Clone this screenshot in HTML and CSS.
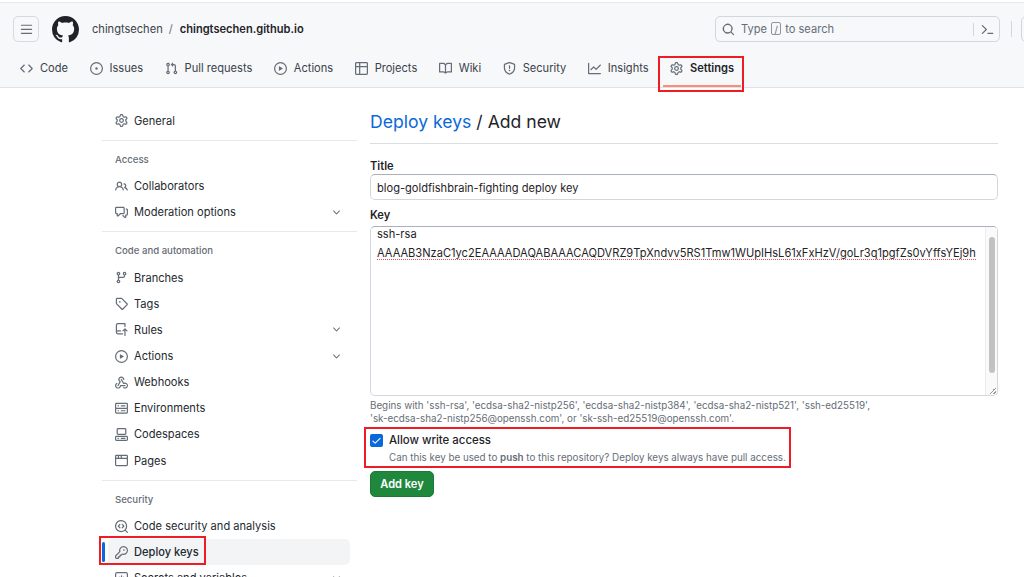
FILE: index.html
```html
<!DOCTYPE html>
<html lang="en">
<head>
    <meta charset="UTF-8">
    <meta name="viewport" content="width=device-width, initial-scale=1.0">
    <title>Add deploy key</title>
    <link rel="stylesheet" href="styles.css">
</head>
<body>
    <svg class="sprite" aria-hidden="true">
        <symbol id="i-bars" viewBox="0 0 16 16"><path d="M1 2.75A.75.75 0 0 1 1.75 2h12.5a.75.75 0 0 1 0 1.5H1.75A.75.75 0 0 1 1 2.75Zm0 5A.75.75 0 0 1 1.75 7h12.5a.75.75 0 0 1 0 1.5H1.75A.75.75 0 0 1 1 7.75ZM1.75 12h12.5a.75.75 0 0 1 0 1.5H1.75a.75.75 0 0 1 0-1.5Z"/></symbol>
        <symbol id="i-github" viewBox="0 0 16 16"><path d="M8 0c4.42 0 8 3.58 8 8a8.013 8.013 0 0 1-5.45 7.59c-.4.08-.55-.17-.55-.38 0-.27.01-1.13.01-2.2 0-.75-.25-1.23-.54-1.48 1.78-.2 3.65-.88 3.65-3.95 0-.88-.31-1.59-.82-2.15.08-.2.36-1.02-.08-2.12 0 0-.67-.22-2.2.82-.64-.18-1.32-.27-2-.27-.68 0-1.36.09-2 .27-1.53-1.03-2.2-.82-2.2-.82-.44 1.1-.16 1.92-.08 2.12-.51.56-.82 1.28-.82 2.15 0 3.06 1.86 3.75 3.64 3.95-.23.2-.44.55-.51 1.07-.46.21-1.61.55-2.33-.66-.15-.24-.6-.83-1.23-.82-.67.01-.27.38.01.53.34.19.73.9.82 1.13.16.45.68 1.31 2.69.94 0 .67.01 1.3.01 1.49 0 .21-.15.45-.55.38A7.995 7.995 0 0 1 0 8c0-4.42 3.58-8 8-8Z"/></symbol>
        <symbol id="i-code" viewBox="0 0 16 16"><path d="m11.28 3.22 4.25 4.25a.75.75 0 0 1 0 1.06l-4.25 4.25a.749.749 0 0 1-1.275-.326.749.749 0 0 1 .215-.734L13.94 8l-3.72-3.72a.749.749 0 0 1 .326-1.275.749.749 0 0 1 .734.215Zm-6.56 0a.751.751 0 0 1 1.042.018.751.751 0 0 1 .018 1.042L2.06 8l3.72 3.72a.749.749 0 0 1-.326 1.275.749.749 0 0 1-.734-.215L.47 8.53a.75.75 0 0 1 0-1.06Z"/></symbol>
        <symbol id="i-issue" viewBox="0 0 16 16"><path d="M8 9.5a1.5 1.5 0 1 0 0-3 1.5 1.5 0 0 0 0 3Z"/><path d="M8 0a8 8 0 1 1 0 16A8 8 0 0 1 8 0ZM1.5 8a6.5 6.5 0 1 0 13 0 6.5 6.5 0 0 0-13 0Z"/></symbol>
        <symbol id="i-pr" viewBox="0 0 16 16"><path d="M1.5 3.25a2.25 2.25 0 1 1 3 2.122v5.256a2.251 2.251 0 1 1-1.5 0V5.372A2.25 2.25 0 0 1 1.5 3.25Zm5.677-.177L9.573.677A.25.25 0 0 1 10 .854V2.5h1A2.5 2.5 0 0 1 13.5 5v5.628a2.251 2.251 0 1 1-1.5 0V5a1 1 0 0 0-1-1h-1v1.646a.25.25 0 0 1-.427.177L7.177 3.427a.25.25 0 0 1 0-.354ZM3.75 2.5a.75.75 0 1 0 0 1.5.75.75 0 0 0 0-1.5Zm0 9.5a.75.75 0 1 0 0 1.5.75.75 0 0 0 0-1.5Zm8.25.75a.75.75 0 1 0 1.5 0 .75.75 0 0 0-1.5 0Z"/></symbol>
        <symbol id="i-play" viewBox="0 0 16 16"><path d="M8 0a8 8 0 1 1 0 16A8 8 0 0 1 8 0ZM1.5 8a6.5 6.5 0 1 0 13 0 6.5 6.5 0 0 0-13 0Zm4.879-2.773 4.264 2.559a.25.25 0 0 1 0 .428l-4.264 2.559A.25.25 0 0 1 6 10.559V5.442a.25.25 0 0 1 .379-.215Z"/></symbol>
        <symbol id="i-table" viewBox="0 0 16 16"><path d="M0 1.75C0 .784.784 0 1.75 0h12.5C15.216 0 16 .784 16 1.75v12.5A1.75 1.75 0 0 1 14.25 16H1.75A1.75 1.75 0 0 1 0 14.25ZM6.5 6.5v8h7.75a.25.25 0 0 0 .25-.25V6.5Zm8-1.5V1.75a.25.25 0 0 0-.25-.25H6.5V5Zm-13 1.5v7.75c0 .138.112.25.25.25H5v-8ZM5 5V1.5H1.75a.25.25 0 0 0-.25.25V5Z"/></symbol>
        <symbol id="i-book" viewBox="0 0 16 16"><path d="M0 1.75A.75.75 0 0 1 .75 1h4.253c1.227 0 2.317.59 3 1.501A3.743 3.743 0 0 1 11.006 1h4.245a.75.75 0 0 1 .75.75v10.5a.75.75 0 0 1-.75.75h-4.507a2.25 2.25 0 0 0-1.591.659l-.622.621a.75.75 0 0 1-1.06 0l-.622-.621A2.25 2.25 0 0 0 5.258 13H.75a.75.75 0 0 1-.75-.75Zm7.251 10.324.004-5.073-.002-2.253A2.25 2.25 0 0 0 5.003 2.5H1.5v9h3.757a3.75 3.75 0 0 1 1.994.574ZM8.755 4.75l-.004 7.322a3.752 3.752 0 0 1 1.992-.572H14.5v-9h-3.495a2.25 2.25 0 0 0-2.25 2.25Z"/></symbol>
        <symbol id="i-shield" viewBox="0 0 16 16"><path d="M7.467.133a1.748 1.748 0 0 1 1.066 0l5.25 1.68A1.75 1.75 0 0 1 15 3.48V7c0 1.566-.32 3.182-1.303 4.682-.983 1.498-2.585 2.813-5.032 3.855a1.697 1.697 0 0 1-1.33 0c-2.447-1.042-4.049-2.357-5.032-3.855C1.32 10.182 1 8.566 1 7V3.48a1.75 1.75 0 0 1 1.217-1.667Zm.61 1.429a.25.25 0 0 0-.153 0l-5.25 1.68a.25.25 0 0 0-.174.238V7c0 1.358.275 2.666 1.057 3.86.784 1.194 2.121 2.34 4.366 3.297a.196.196 0 0 0 .154 0c2.245-.956 3.582-2.104 4.366-3.298C13.225 9.666 13.5 8.36 13.5 7V3.48a.251.251 0 0 0-.174-.237l-5.25-1.68ZM8.75 4.75v3a.75.75 0 0 1-1.5 0v-3a.75.75 0 0 1 1.5 0ZM9 10.5a1 1 0 1 1-2 0 1 1 0 0 1 2 0Z"/></symbol>
        <symbol id="i-graph" viewBox="0 0 16 16"><path d="M1.5 1.75V13.5h13.75a.75.75 0 0 1 0 1.5H.75a.75.75 0 0 1-.75-.75V1.75a.75.75 0 0 1 1.5 0Zm14.28 2.53-5.25 5.25a.75.75 0 0 1-1.06 0L7 7.06 4.28 9.78a.751.751 0 0 1-1.042-.018.751.751 0 0 1-.018-1.042l3.25-3.25a.75.75 0 0 1 1.06 0L10 7.94l4.72-4.72a.751.751 0 0 1 1.042.018.751.751 0 0 1 .018 1.042Z"/></symbol>
        <symbol id="i-gear" viewBox="0 0 16 16"><path d="M8 0a8.2 8.2 0 0 1 .701.031C9.444.095 9.99.645 10.16 1.29l.288 1.107c.018.066.079.158.212.224.231.114.454.243.668.386.123.082.233.09.299.071l1.103-.303c.644-.176 1.392.021 1.82.63.27.385.506.792.704 1.218.315.675.111 1.422-.364 1.891l-.814.806c-.049.048-.098.147-.088.294.016.257.016.515 0 .772-.01.147.038.246.088.294l.814.806c.475.469.679 1.216.364 1.891a7.977 7.977 0 0 1-.704 1.217c-.428.61-1.176.807-1.82.63l-1.102-.302c-.067-.019-.177-.011-.3.071a5.909 5.909 0 0 1-.668.386c-.133.066-.194.158-.211.224l-.29 1.106c-.168.646-.715 1.196-1.458 1.26a8.006 8.006 0 0 1-1.402 0c-.743-.064-1.289-.614-1.458-1.26l-.289-1.106c-.018-.066-.079-.158-.212-.224a5.738 5.738 0 0 1-.668-.386c-.123-.082-.233-.09-.299-.071l-1.103.303c-.644.176-1.392-.021-1.82-.63a8.12 8.12 0 0 1-.704-1.218c-.315-.675-.111-1.422.363-1.891l.815-.806c.05-.048.098-.147.088-.294a6.214 6.214 0 0 1 0-.772c.01-.147-.038-.246-.088-.294l-.815-.806C.635 6.045.431 5.298.746 4.623a7.92 7.92 0 0 1 .704-1.217c.428-.61 1.176-.807 1.82-.63l1.102.302c.067.019.177.011.3-.071.214-.143.437-.272.668-.386.133-.066.194-.158.211-.224l.29-1.106C6.009.645 6.556.095 7.299.03 7.53.01 7.764 0 8 0Zm-.571 1.525c-.036.003-.108.036-.137.146l-.289 1.105c-.147.561-.549.967-.998 1.189-.173.086-.34.183-.5.29-.417.278-.97.423-1.529.27l-1.103-.303c-.109-.03-.175.016-.195.045-.22.312-.412.644-.573.99-.014.031-.021.11.059.19l.815.806c.411.406.562.957.53 1.456a4.709 4.709 0 0 0 0 .582c.032.499-.119 1.05-.53 1.456l-.815.806c-.081.08-.073.159-.059.19.162.346.353.677.573.989.02.03.085.076.195.046l1.102-.303c.56-.153 1.113-.008 1.53.27.161.107.328.204.501.29.447.222.85.629.997 1.189l.289 1.105c.029.109.101.143.137.146a6.6 6.6 0 0 0 1.142 0c.036-.003.108-.036.137-.146l.289-1.105c.147-.561.549-.967.998-1.189.173-.086.34-.183.5-.29.417-.278.97-.423 1.529-.27l1.103.303c.109.029.175-.016.195-.045.22-.313.411-.644.573-.99.014-.031.021-.11-.059-.19l-.815-.806c-.411-.406-.562-.957-.53-1.456a4.709 4.709 0 0 0 0-.582c-.032-.499.119-1.05.53-1.456l.815-.806c.081-.08.073-.159.059-.19a6.464 6.464 0 0 0-.573-.989c-.02-.03-.085-.076-.195-.046l-1.102.303c-.56.153-1.113.008-1.53-.27a4.44 4.44 0 0 0-.501-.29c-.447-.222-.85-.629-.997-1.189l-.289-1.105c-.029-.11-.101-.143-.137-.146a6.6 6.6 0 0 0-1.142 0ZM11 8a3 3 0 1 1-6 0 3 3 0 0 1 6 0ZM9.5 8a1.5 1.5 0 1 0-3.001.001A1.5 1.5 0 0 0 9.5 8Z"/></symbol>
        <symbol id="i-search" viewBox="0 0 16 16"><path d="M10.68 11.74a6 6 0 0 1-7.922-8.982 6 6 0 0 1 8.982 7.922l3.04 3.04a.749.749 0 0 1-.326 1.275.749.749 0 0 1-.734-.215ZM11.5 7a4.499 4.499 0 1 0-8.997 0A4.499 4.499 0 0 0 11.5 7Z"/></symbol>
        <symbol id="i-palette" viewBox="0 0 16 16"><path d="M1.2 2.7a.75.75 0 0 1 1.06 0l4.8 4.8a.75.75 0 0 1 0 1.06l-4.8 4.8a.75.75 0 0 1-1.06-1.06L5.47 8.03 1.2 3.76a.75.75 0 0 1 0-1.06ZM8.5 12h6a.75.75 0 0 1 0 1.5h-6a.75.75 0 0 1 0-1.5Z"/></symbol>
        <symbol id="i-people" viewBox="0 0 16 16"><path d="M2 5.5a3.5 3.5 0 1 1 5.898 2.549 5.508 5.508 0 0 1 3.034 4.084.75.75 0 1 1-1.482.235 4 4 0 0 0-7.9 0 .75.75 0 0 1-1.482-.236A5.507 5.507 0 0 1 3.102 8.05 3.493 3.493 0 0 1 2 5.5ZM11 4a3.001 3.001 0 0 1 2.22 5.018 5.01 5.01 0 0 1 2.56 3.012.749.749 0 0 1-.885.954.752.752 0 0 1-.549-.514 3.507 3.507 0 0 0-2.522-2.372.75.75 0 0 1-.574-.73v-.352a.75.75 0 0 1 .416-.672A1.5 1.5 0 0 0 11 5.5.75.75 0 0 1 11 4Zm-5.5-.5a2 2 0 1 0-.001 3.999A2 2 0 0 0 5.5 3.5Z"/></symbol>
        <symbol id="i-comment" viewBox="0 0 16 16"><path d="M1.75 1h8.5c.966 0 1.75.784 1.75 1.75v5.5A1.75 1.75 0 0 1 10.25 10H7.061l-2.574 2.573A1.458 1.458 0 0 1 2 11.543V10h-.25A1.75 1.75 0 0 1 0 8.25v-5.5C0 1.784.784 1 1.75 1ZM1.5 2.75v5.5c0 .138.112.25.25.25h1a.75.75 0 0 1 .75.75v2.19l2.72-2.72a.749.749 0 0 1 .53-.22h3.5a.25.25 0 0 0 .25-.25v-5.5a.25.25 0 0 0-.25-.25h-8.5a.25.25 0 0 0-.25.25Zm13 2a.25.25 0 0 0-.25-.25h-.5a.75.75 0 0 1 0-1.5h.5c.966 0 1.75.784 1.75 1.75v5.5A1.75 1.75 0 0 1 14.25 12H14v1.543a1.458 1.458 0 0 1-2.487 1.03L9.22 12.28a.749.749 0 0 1 .326-1.275.749.749 0 0 1 .734.215l2.22 2.22v-2.19a.75.75 0 0 1 .75-.75h1a.25.25 0 0 0 .25-.25Z"/></symbol>
        <symbol id="i-branch" viewBox="0 0 16 16"><path d="M9.5 3.25a2.25 2.25 0 1 1 3 2.122V6A2.5 2.5 0 0 1 10 8.5H6a1 1 0 0 0-1 1v1.128a2.251 2.251 0 1 1-1.5 0V5.372a2.25 2.25 0 1 1 1.5 0v1.836A2.493 2.493 0 0 1 6 7h4a1 1 0 0 0 1-1v-.628A2.25 2.25 0 0 1 9.5 3.25Zm-6 0a.75.75 0 1 0 1.5 0 .75.75 0 0 0-1.5 0Zm8.25-.75a.75.75 0 1 0 0 1.5.75.75 0 0 0 0-1.5ZM4.25 12a.75.75 0 1 0 0 1.5.75.75 0 0 0 0-1.5Z"/></symbol>
        <symbol id="i-tag" viewBox="0 0 16 16"><path d="M1 7.775V2.75C1 1.784 1.784 1 2.75 1h5.025c.464 0 .91.184 1.238.513l6.25 6.25a1.75 1.75 0 0 1 0 2.474l-5.026 5.026a1.75 1.75 0 0 1-2.474 0l-6.25-6.25A1.75 1.75 0 0 1 1 7.775Zm1.5 0c0 .066.026.13.073.177l6.25 6.25a.25.25 0 0 0 .354 0l5.025-5.025a.25.25 0 0 0 0-.354l-6.25-6.25a.25.25 0 0 0-.177-.073H2.75a.25.25 0 0 0-.25.25ZM6 5a1 1 0 1 1 0 2 1 1 0 0 1 0-2Z"/></symbol>
        <symbol id="i-push" viewBox="0 0 16 16"><path d="M1 2.5A2.5 2.5 0 0 1 3.5 0h8.75a.75.75 0 0 1 .75.75v3.5a.75.75 0 0 1-1.5 0V1.5h-8a1 1 0 0 0-1 1v6.708A2.493 2.493 0 0 1 3.5 9h3.25a.75.75 0 0 1 0 1.5H3.5a1 1 0 0 0 0 2h5.75a.75.75 0 0 1 0 1.5H3.5A2.5 2.5 0 0 1 1 11.5Zm13.23 7.79h-.001l-1.224-1.224v6.184a.75.75 0 0 1-1.5 0V9.066L10.28 10.29a.75.75 0 0 1-1.06-1.061l2.505-2.504a.75.75 0 0 1 1.06 0L15.29 9.23a.751.751 0 0 1-.018 1.042.751.751 0 0 1-1.042.018Z"/></symbol>
        <symbol id="i-webhook" viewBox="0 0 16 16"><path d="M5.5 4.25a2.25 2.25 0 0 1 4.5 0 .75.75 0 0 0 1.5 0 3.75 3.75 0 1 0-6.14 2.889l-2.272 4.258a.75.75 0 0 0 1.324.706L7 7.25a.75.75 0 0 0-.309-1.015A2.25 2.25 0 0 1 5.5 4.25Z"/><path d="M7.364 3.607a.75.75 0 0 1 1.03.257l2.608 4.349a3.75 3.75 0 1 1-.628 6.785.75.75 0 0 1 .752-1.299 2.25 2.25 0 1 0-.033-3.88.75.75 0 0 1-1.03-.256L7.107 4.636a.75.75 0 0 1 .257-1.03Z"/><path d="M2.9 8.776A.75.75 0 0 1 2.625 9.8 2.25 2.25 0 1 0 6 11.75a.75.75 0 0 1 .75-.751h5.5a.75.75 0 0 1 0 1.5H7.425a3.751 3.751 0 1 1-5.55-3.998.75.75 0 0 1 1.024.274Z"/></symbol>
        <symbol id="i-server" viewBox="0 0 16 16"><path d="M1.75 1h12.5c.966 0 1.75.784 1.75 1.75v4c0 .372-.116.717-.314 1 .198.283.314.628.314 1v4a1.75 1.75 0 0 1-1.75 1.75H1.75A1.75 1.75 0 0 1 0 12.75v-4c0-.372.116-.717.314-1a1.739 1.739 0 0 1-.314-1v-4C0 1.784.784 1 1.75 1ZM1.5 2.75v4c0 .138.112.25.25.25h12.5a.25.25 0 0 0 .25-.25v-4a.25.25 0 0 0-.25-.25H1.75a.25.25 0 0 0-.25.25Zm.25 5.75a.25.25 0 0 0-.25.25v4c0 .138.112.25.25.25h12.5a.25.25 0 0 0 .25-.25v-4a.25.25 0 0 0-.25-.25ZM7 4.75A.75.75 0 0 1 7.75 4h4.5a.75.75 0 0 1 0 1.5h-4.5A.75.75 0 0 1 7 4.75ZM7.75 10h4.5a.75.75 0 0 1 0 1.5h-4.5a.75.75 0 0 1 0-1.5ZM3 4.75A.75.75 0 0 1 3.75 4h.5a.75.75 0 0 1 0 1.5h-.5A.75.75 0 0 1 3 4.75ZM3.75 10h.5a.75.75 0 0 1 0 1.5h-.5a.75.75 0 0 1 0-1.5Z"/></symbol>
        <symbol id="i-codespaces" viewBox="0 0 16 16"><path d="M0 11.25c0-.966.784-1.75 1.75-1.75h12.5c.966 0 1.75.784 1.75 1.75v3A1.75 1.75 0 0 1 14.25 16H1.75A1.75 1.75 0 0 1 0 14.25Zm2-9.5C2 .784 2.784 0 3.75 0h8.5C13.216 0 14 .784 14 1.75v5a1.75 1.75 0 0 1-1.75 1.75h-8.5A1.75 1.75 0 0 1 2 6.75Zm1.75-.25a.25.25 0 0 0-.25.25v5c0 .138.112.25.25.25h8.5a.25.25 0 0 0 .25-.25v-5a.25.25 0 0 0-.25-.25Zm-2 9.5a.25.25 0 0 0-.25.25v3c0 .138.112.25.25.25h12.5a.25.25 0 0 0 .25-.25v-3a.25.25 0 0 0-.25-.25Z"/><path d="M7 12.75a.75.75 0 0 1 .75-.75h4.5a.75.75 0 0 1 0 1.5h-4.5a.75.75 0 0 1-.75-.75Zm-4 0a.75.75 0 0 1 .75-.75h.5a.75.75 0 0 1 0 1.5h-.5a.75.75 0 0 1-.75-.75Z"/></symbol>
        <symbol id="i-browser" viewBox="0 0 16 16"><path d="M0 2.75C0 1.784.784 1 1.75 1h12.5c.966 0 1.75.784 1.75 1.75v10.5A1.75 1.75 0 0 1 14.25 15H1.75A1.75 1.75 0 0 1 0 13.25ZM14.5 6h-13v7.25c0 .138.112.25.25.25h12.5a.25.25 0 0 0 .25-.25Zm-6-3.5v2h6V2.75a.25.25 0 0 0-.25-.25ZM5 2.5v2h2v-2Zm-3.25 0a.25.25 0 0 0-.25.25V4.5H3.5v-2Z"/></symbol>
        <symbol id="i-codescan" viewBox="0 0 16 16"><path d="M8.47 4.97a.75.75 0 0 0 0 1.06L9.94 7.5 8.47 8.97a.75.75 0 1 0 1.06 1.06l2-2a.75.75 0 0 0 0-1.06l-2-2a.75.75 0 0 0-1.06 0ZM6.53 6.03a.75.75 0 0 0-1.06-1.06l-2 2a.75.75 0 0 0 0 1.06l2 2a.75.75 0 1 0 1.06-1.06L5.06 7.5l1.47-1.47Z"/><path d="M12.246 13.307a7.501 7.501 0 1 1 1.06-1.06l2.474 2.473a.749.749 0 0 1-.326 1.275.749.749 0 0 1-.734-.215ZM1.5 7.5a6.002 6.002 0 0 0 3.608 5.504 6.002 6.002 0 0 0 6.486-1.117.748.748 0 0 1 .292-.293A6 6 0 1 0 1.5 7.5Z"/></symbol>
        <symbol id="i-key" viewBox="0 0 16 16"><path d="M10.5 0a5.499 5.499 0 1 1-1.288 10.848l-.932.932a.749.749 0 0 1-.53.22H7v.75a.749.749 0 0 1-.22.53l-.5.5a.749.749 0 0 1-.53.22H5v.75a.749.749 0 0 1-.22.53l-.5.5a.749.749 0 0 1-.53.22h-2A1.75 1.75 0 0 1 0 14.25v-2c0-.199.079-.389.22-.53l4.932-4.932A5.5 5.5 0 0 1 10.5 0Zm-4 5.5c-.001.431.069.86.205 1.269a.75.75 0 0 1-.181.768L1.5 12.56v1.69c0 .138.112.25.25.25h1.69l.06-.06v-1.19a.75.75 0 0 1 .75-.75h1.19l.06-.06v-1.19a.75.75 0 0 1 .75-.75h1.19l1.023-1.025a.75.75 0 0 1 .768-.18A4 4 0 1 0 6.5 5.5ZM11 6a1 1 0 1 1 0-2 1 1 0 0 1 0 2Z"/></symbol>
        <symbol id="i-asterisk" viewBox="0 0 16 16"><path d="M0 2.75A2.75 2.75 0 0 1 2.75 0h10.5A2.75 2.75 0 0 1 16 2.75v10.5A2.75 2.75 0 0 1 13.25 16H2.75A2.75 2.75 0 0 1 0 13.25ZM2.75 1.5c-.69 0-1.25.56-1.25 1.25v10.5c0 .69.56 1.25 1.25 1.25h10.5c.69 0 1.25-.56 1.25-1.25V2.75c0-.69-.56-1.25-1.25-1.25Z"/><path d="M8 4a.75.75 0 0 1 .75.75V6.7l1.69-.975a.75.75 0 0 1 .75 1.3L9.5 8l1.69.976a.75.75 0 0 1-.75 1.298L8.75 9.3v1.951a.75.75 0 0 1-1.5 0V9.299l-1.69.976a.75.75 0 0 1-.75-1.3L6.5 8l-1.69-.975a.75.75 0 0 1 .75-1.3l1.69.976V4.75A.75.75 0 0 1 8 4Z"/></symbol>
        <symbol id="i-chevron" viewBox="0 0 16 16"><path d="M12.78 5.22a.749.749 0 0 1 0 1.06l-4.25 4.25a.749.749 0 0 1-1.06 0L3.22 6.28a.749.749 0 1 1 1.06-1.06L8 8.939l3.72-3.719a.749.749 0 0 1 1.06 0Z"/></symbol>
        <symbol id="i-check" viewBox="0 0 16 16"><path d="M13.78 4.22a.75.75 0 0 1 0 1.06l-7.25 7.25a.75.75 0 0 1-1.06 0L2.22 9.28a.751.751 0 0 1 .018-1.042.751.751 0 0 1 1.042-.018L6 10.94l6.72-6.72a.75.75 0 0 1 1.06 0Z"/></symbol>
    </svg>

    <header class="header">
        <div class="topbar">
            <button class="menu-btn" type="button"><svg class="icon"><use href="#i-bars"/></svg></button>
            <svg class="logo"><use href="#i-github"/></svg>
            <div class="crumbs">
                <span>chingtsechen</span>
                <span class="crumb-sep">/</span>
                <strong>chingtsechen.github.io</strong>
            </div>
            <div class="search">
                <svg class="icon"><use href="#i-search"/></svg>
                <span class="search-text">Type <kbd>/</kbd> to search</span>
                <span class="search-sep"></span>
                <svg class="icon"><use href="#i-palette"/></svg>
            </div>
            <span class="top-sep"></span>
            <span class="top-btn"></span>
        </div>
        <nav class="tabs">
            <a class="tab"><svg class="icon"><use href="#i-code"/></svg>Code</a>
            <a class="tab"><svg class="icon"><use href="#i-issue"/></svg>Issues</a>
            <a class="tab"><svg class="icon"><use href="#i-pr"/></svg>Pull requests</a>
            <a class="tab"><svg class="icon"><use href="#i-play"/></svg>Actions</a>
            <a class="tab"><svg class="icon"><use href="#i-table"/></svg>Projects</a>
            <a class="tab"><svg class="icon"><use href="#i-book"/></svg>Wiki</a>
            <a class="tab"><svg class="icon"><use href="#i-shield"/></svg>Security</a>
            <a class="tab"><svg class="icon"><use href="#i-graph"/></svg>Insights</a>
            <a class="tab active"><svg class="icon"><use href="#i-gear"/></svg>Settings</a>
        </nav>
    </header>

    <div class="layout">
        <aside class="sidebar">
            <a class="row"><svg class="icon"><use href="#i-gear"/></svg>General</a>
            <section class="side-group">
                <h2>Access</h2>
                <a class="row"><svg class="icon"><use href="#i-people"/></svg>Collaborators</a>
                <a class="row"><svg class="icon"><use href="#i-comment"/></svg>Moderation options<svg class="icon chev"><use href="#i-chevron"/></svg></a>
            </section>
            <section class="side-group">
                <h2>Code and automation</h2>
                <a class="row"><svg class="icon"><use href="#i-branch"/></svg>Branches</a>
                <a class="row"><svg class="icon"><use href="#i-tag"/></svg>Tags</a>
                <a class="row"><svg class="icon"><use href="#i-push"/></svg>Rules<svg class="icon chev"><use href="#i-chevron"/></svg></a>
                <a class="row"><svg class="icon"><use href="#i-play"/></svg>Actions<svg class="icon chev"><use href="#i-chevron"/></svg></a>
                <a class="row"><svg class="icon"><use href="#i-webhook"/></svg>Webhooks</a>
                <a class="row"><svg class="icon"><use href="#i-server"/></svg>Environments</a>
                <a class="row"><svg class="icon"><use href="#i-codespaces"/></svg>Codespaces</a>
                <a class="row"><svg class="icon"><use href="#i-browser"/></svg>Pages</a>
            </section>
            <section class="side-group">
                <h2>Security</h2>
                <a class="row"><svg class="icon"><use href="#i-codescan"/></svg>Code security and analysis</a>
                <a class="row current"><svg class="icon"><use href="#i-key"/></svg>Deploy keys</a>
                <a class="row"><svg class="icon"><use href="#i-asterisk"/></svg>Secrets and variables<svg class="icon chev"><use href="#i-chevron"/></svg></a>
            </section>
        </aside>

        <main class="content">
            <h1 class="page-title"><a>Deploy keys</a> / Add new</h1>
            <form action="#">
                <label class="field-label">Title</label>
                <div class="text-input">blog-goldfishbrain-fighting deploy key</div>
                <label class="field-label key-label">Key</label>
                <div class="key-box">
                    <div class="key-text">
                        <div>ssh-rsa</div>
                        <div class="misspelt">AAAAB3NzaC1yc2EAAAADAQABAAACAQDVRZ9TpXndvv5RS1Tmw1WUpIHsL61xFxHzV/goLr3q1pgfZs0vYffsYEj9h</div>
                    </div>
                    <div class="scrollbar"><span class="thumb"></span><span class="grip"></span></div>
                </div>
                <p class="hint">Begins with 'ssh-rsa', 'ecdsa-sha2-nistp256', 'ecdsa-sha2-nistp384', 'ecdsa-sha2-nistp521', 'ssh-ed25519',<br>'sk-ecdsa-sha2-nistp256@openssh.com', or 'sk-ssh-ed25519@openssh.com'.</p>
                <div class="write-access">
                    <span class="checkbox"><svg class="icon"><use href="#i-check"/></svg></span>
                    <div>
                        <div class="check-title">Allow write access</div>
                        <div class="check-note">Can this key be used to <b>push</b> to this repository? Deploy keys always have pull access.</div>
                    </div>
                </div>
                <button class="submit" type="button">Add key</button>
            </form>
        </main>
    </div>

    <!-- red annotation boxes drawn over the screenshot -->
    <span class="mark mark-settings"></span>
    <span class="mark mark-write"></span>
    <span class="mark mark-deploy"></span>
</body>
</html>
```

FILE: styles.css
```css
html, body {
    height: 100%;
    overflow: hidden;
}
body {
    margin: 0;
    background-color: #fff;
    color: #1f2328;
    font-family: Inter, "Liberation Sans", sans-serif;
    font-size: 11.1px;
    position: relative;
}
.sprite {
    display: none;
}
.icon {
    width: 13px;
    height: 13px;
    fill: #656d76;
    flex: none;
}

/* header */
.header {
    margin-top: 2px;
    height: 86px;
    box-sizing: border-box;
    background-color: #f6f8fa;
    border-top: 1px solid #e5e8eb;
    border-bottom: 1px solid #dfe3e7;
}
.topbar {
    display: flex;
    align-items: center;
    height: 26px;
    padding: 13px 0 0 13px;
}
.menu-btn {
    width: 26px;
    height: 26px;
    padding: 0;
    display: flex;
    align-items: center;
    justify-content: center;
    background: none;
    border: 1px solid #d5dae0;
    border-radius: 5px;
}
.logo {
    width: 27px;
    height: 27px;
    margin-left: 13px;
    fill: #1f2328;
}
.crumbs {
    margin-left: 13px;
    display: flex;
    gap: 6px;
    color: #3b424a;
}
.crumb-sep {
    color: #656d76;
}
.crumbs strong {
    color: #1f2328;
    font-weight: 600;
    margin-left: 1px;
}
.search {
    margin-left: auto;
    width: 285px;
    height: 26px;
    box-sizing: border-box;
    border: 1px solid #d0d7de;
    border-radius: 5px;
    display: flex;
    align-items: center;
    padding: 0 5px 0 6px;
    color: #656d76;
}
.search-text {
    margin-left: 6px;
    flex: 1;
}
.search kbd {
    display: inline-block;
    width: 10px;
    height: 13px;
    line-height: 13px;
    margin: 0 1px;
    text-align: center;
    border: 1px solid #8c959f;
    border-radius: 2px;
    font-family: inherit;
    font-size: 9.5px;
    box-sizing: border-box;
}
.search-sep {
    width: 1px;
    height: 13px;
    margin-right: 7px;
    background-color: #d0d7de;
}
.top-sep {
    width: 1px;
    height: 16px;
    margin-left: 11px;
    background-color: #d0d7de;
}
.top-btn {
    width: 26px;
    height: 26px;
    margin-left: 9px;
    margin-right: -23px;
    box-sizing: border-box;
    border: 1px solid #d0d7de;
    border-radius: 5px;
}
.tabs {
    display: flex;
    padding: 13px 0 0 13px;
    gap: 7.5px;
}
.tab {
    display: flex;
    align-items: center;
    gap: 7px;
    height: 26px;
    padding: 0 7px;
    color: #3b424a;
    position: relative;
}
.tab.active {
    color: #1f2328;
    font-weight: 600;
}
.tab.active::after {
    content: "";
    position: absolute;
    left: 0;
    right: 0;
    bottom: -6px;
    height: 2px;
    background-color: #fd8c73;
}

/* sidebar + form */
.layout {
    display: flex;
    padding: 19.5px 0 0 102px;
}
.sidebar {
    width: 255px;
    flex: none;
}
.row {
    display: flex;
    align-items: center;
    gap: 6px;
    height: 26.15px;
    margin-left: 6px;
    margin-right: 7px;
    padding: 0 7px;
    color: #24292f;
    border-radius: 5px;
    position: relative;
}
.row .chev {
    margin-left: auto;
    width: 11px;
    height: 11px;
    margin-right: 1px;
}
.row.current {
    background-color: #f2f4f6;
    font-weight: 500;
}
.row.current::before {
    content: "";
    position: absolute;
    left: -6px;
    top: 3px;
    bottom: 3px;
    width: 3px;
    border-radius: 2px;
    background-color: #0969da;
}
.side-group {
    margin-top: 6px;
    border-top: 1px solid #e6e9ec;
    padding-top: 12px;
}
.side-group h2 {
    margin: 0 0 7.3px 13px;
    height: 13px;
    line-height: 13px;
    font-size: 9.6px;
    font-weight: 500;
    color: #656d76;
}
.content {
    width: 628px;
    margin-left: 13px;
}
.page-title {
    margin: 1.5px 0 0;
    padding-bottom: 8px;
    height: 26px;
    border-bottom: 1px solid #d8dee4;
    font-size: 17.6px;
    line-height: 26px;
    font-weight: 400;
}
.page-title a {
    color: #0969da;
}
.field-label {
    display: block;
    margin-top: 15px;
    height: 15px;
    line-height: 15px;
    font-weight: 600;
}
.key-label {
    margin-top: 8px;
}
.text-input {
    height: 26px;
    box-sizing: border-box;
    padding: 0 6px;
    line-height: 26px;
    border: 1px solid #d0d7de;
    border-top-color: #a9b1bb;
    border-radius: 5px;
}
.key-box {
    display: flex;
    height: 170px;
    margin-top: 3px;
    box-sizing: border-box;
    border: 1px solid #d0d7de;
    border-top-color: #a9b1bb;
    border-radius: 5px;
    overflow: hidden;
}
.key-text {
    flex: 1;
    padding: 0 6px;
    line-height: 19px;
    margin-top: -2.5px;
}
.misspelt {
    width: fit-content;
    white-space: nowrap;
    background-image: repeating-linear-gradient(90deg, #ee4b52 0 1px, transparent 1px 2px);
    background-size: 100% 1px;
    background-position: 0 15px;
    background-repeat: no-repeat;
}
.scrollbar {
    width: 12px;
    flex: none;
    border-left: 1px solid #ececec;
    background-color: #fafafa;
    padding-top: 10px;
    box-sizing: border-box;
    position: relative;
}
.thumb {
    display: block;
    width: 6px;
    height: 136px;
    margin-left: 3px;
    border-radius: 3px;
    background-color: #c2c2c2;
}
.grip {
    position: absolute;
    right: 1px;
    bottom: 1px;
    width: 7px;
    height: 7px;
    background-image: linear-gradient(135deg, transparent 50%, #9a9a9a 50%, #9a9a9a 62%, transparent 62%, transparent 76%, #9a9a9a 76%, #9a9a9a 88%, transparent 88%);
}
.hint {
    margin: 3px 0 0;
    font-size: 9.8px;
    line-height: 13px;
    color: #656d76;
}
.write-access {
    display: flex;
    gap: 6px;
    margin-top: 8px;
}
.checkbox {
    width: 13px;
    height: 13px;
    margin-top: 1px;
    border-radius: 2px;
    background-color: #0969da;
    display: flex;
    align-items: center;
    justify-content: center;
}
.checkbox .icon {
    width: 11px;
    height: 11px;
    fill: #fff;
}
.check-title {
    font-size: 11.4px;
    font-weight: 500;
    line-height: 14px;
}
.check-note {
    margin-top: 4px;
    font-size: 9.8px;
    line-height: 13px;
    color: #656d76;
}
.check-note b {
    font-weight: 600;
}
.submit {
    display: block;
    margin-top: 7px;
    width: 64px;
    height: 26px;
    padding: 0;
    border: 1px solid #1b7a36;
    border-radius: 5px;
    background-color: #1f883d;
    color: #fff;
    font-family: inherit;
    font-size: 11.1px;
    font-weight: 600;
}

/* annotations */
.mark {
    position: absolute;
    box-sizing: border-box;
    border: 2px solid #ee1c25;
}
.mark-settings {
    left: 658px;
    top: 56px;
    width: 86px;
    height: 36px;
}
.mark-write {
    left: 364px;
    top: 427px;
    width: 427px;
    height: 41px;
}
.mark-deploy {
    left: 99px;
    top: 536px;
    width: 107px;
    height: 29px;
}
```
